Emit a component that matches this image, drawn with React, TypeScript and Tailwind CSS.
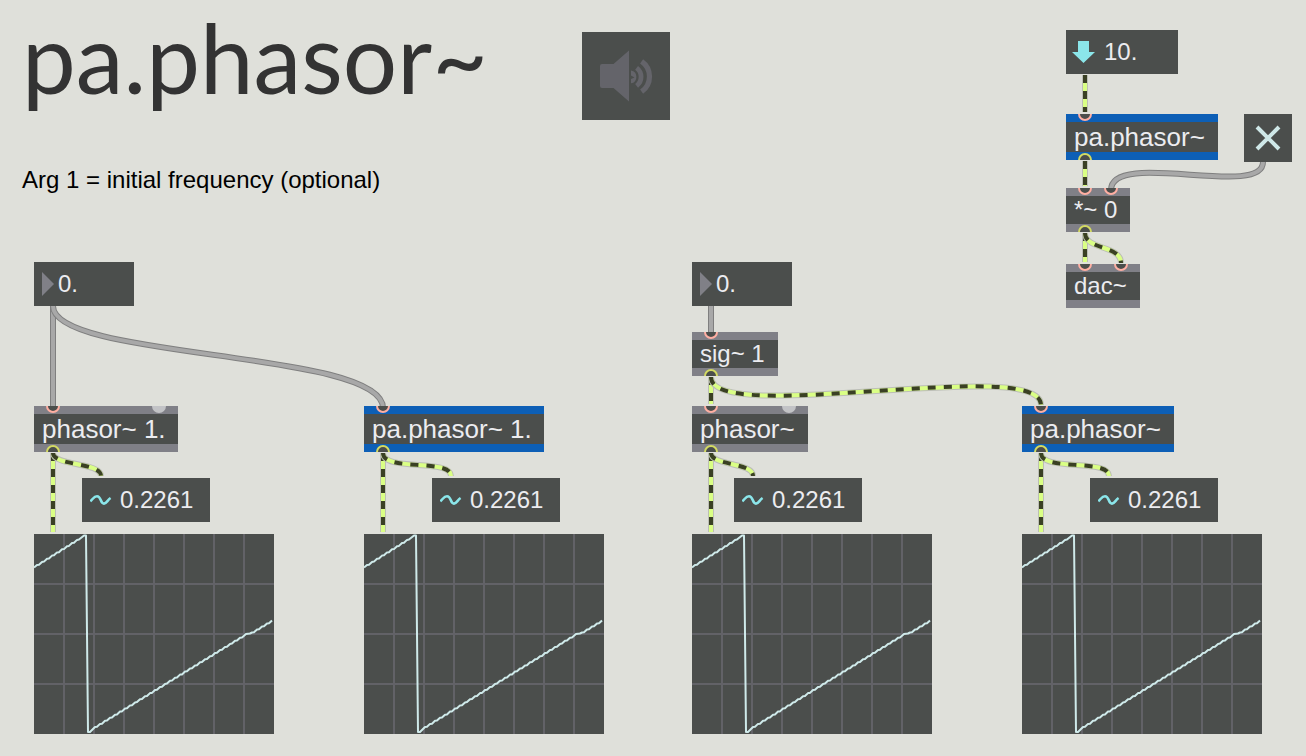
import React, { useState } from "react";

const SANS = "font-['Liberation_Sans',Arial,sans-serif]";

type Point = { x: number; y: number };

type PatchObject = Point & {
  id: string;
  text: string;
  w: number;
  tall: boolean;
  abstraction?: boolean;
  inlets: number[];
  hotless?: number;
  outlet: boolean;
};

const objects: PatchObject[] = [
  { id: "phasor-a", text: "phasor~ 1.", x: 34, y: 406, w: 144, tall: true, inlets: [19], hotless: 125, outlet: true },
  { id: "pa-a", text: "pa.phasor~ 1.", x: 364, y: 406, w: 180, tall: true, abstraction: true, inlets: [19], outlet: true },
  { id: "sig", text: "sig~ 1", x: 692, y: 332, w: 86, tall: false, inlets: [19], outlet: true },
  { id: "phasor-b", text: "phasor~", x: 692, y: 406, w: 116, tall: true, inlets: [19], hotless: 97, outlet: true },
  { id: "pa-b", text: "pa.phasor~", x: 1022, y: 406, w: 152, tall: true, abstraction: true, inlets: [19], outlet: true },
  { id: "pa-c", text: "pa.phasor~", x: 1066, y: 114, w: 152, tall: true, abstraction: true, inlets: [19], outlet: true },
  { id: "mul", text: "*~ 0", x: 1066, y: 188, w: 64, tall: false, inlets: [19, 45], outlet: true },
  { id: "dac", text: "dac~", x: 1066, y: 264, w: 74, tall: false, inlets: [19, 55], outlet: false },
];

const meters: Point[] = [
  { x: 82, y: 478 },
  { x: 432, y: 478 },
  { x: 734, y: 478 },
  { x: 1090, y: 478 },
];

const scopes: Point[] = [
  { x: 34, y: 534 },
  { x: 364, y: 534 },
  { x: 692, y: 534 },
  { x: 1022, y: 534 },
];

const controlCords = [
  "M53 306V408",
  "M53 306C53 360 383 350 383 408",
  "M711 306V334",
  "M1263 162C1263 199 1111 149 1111 190",
];

const signalCords = [
  "M53 453V532",
  "M53 453C53 466 101 462 101 476",
  "M383 453V532",
  "M383 453C383 472 451 458 451 476",
  "M711 377V404",
  "M711 377C711 427 1041 355 1041 405",
  "M711 453V532",
  "M711 453C711 466 753 462 753 476",
  "M1041 453V532",
  "M1041 453C1041 472 1109 458 1109 476",
  "M1085 75V112",
  "M1085 161V186",
  "M1085 233V262",
  "M1085 233C1085 250 1121 245 1121 263",
];

function ramp(from: Point, to: Point, step: number): string {
  const slope = (to.y - from.y) / (to.x - from.x);
  let d = "";
  for (let x = from.x; x + step <= to.x; x += step) {
    const y = from.y + slope * (x - from.x);
    d += `L${x} ${y.toFixed(1)}L${x + 2} ${(y + slope * 0.4).toFixed(1)}`;
  }
  return d + `L${to.x} ${to.y}`;
}

const TRACE =
  "M0 33.5" +
  ramp({ x: 3, y: 31 }, { x: 50, y: 1.5 }, 5) +
  "L52 1.5L54 198L56 198" +
  ramp({ x: 61, y: 193 }, { x: 212, y: 100 }, 5) +
  "L216 99.5" +
  ramp({ x: 218, y: 98.5 }, { x: 238, y: 86.5 }, 5);

function Cords() {
  return (
    <svg className="pointer-events-none absolute left-0 top-0 overflow-visible" width="1306" height="756" fill="none" aria-hidden="true">
      {controlCords.map((d) => (
        <g key={d}>
          <path d={d} stroke="#7f7f7f" strokeWidth="6" />
          <path d={d} stroke="#a8a8a8" strokeWidth="4" />
        </g>
      ))}
      {signalCords.map((d) => (
        <g key={d}>
          <path d={d} stroke="#bcbeb6" strokeWidth="6" />
          <path d={d} stroke="#daff85" strokeWidth="4" />
          <path d={d} stroke="#3a4024" strokeWidth="4" strokeDasharray="8 8" />
        </g>
      ))}
    </svg>
  );
}

function Box({ o }: { o: PatchObject }) {
  const h = o.tall ? 46 : 44;
  const bar = o.abstraction ? "border-[#0d5fb6]" : "border-[#808087]";
  const size = o.tall ? "text-[26px]" : "text-2xl";
  return (
    <div
      className={`absolute flex items-center border-y-8 bg-[#4b4e4c] pl-2 whitespace-pre text-[#ececf0] ${bar}`}
      style={{ left: o.x, top: o.y, width: o.w, height: h }}
    >
      <span className={`${size} leading-7`}>{o.text}</span>
      <svg className="absolute -top-2 left-0" width={o.w} height={h} aria-hidden="true">
        {o.inlets.map((cx) => (
          <circle key={cx} cx={cx} cy="0" r="6" fill="#4b4e4c" stroke="#ffafa3" strokeWidth="2" />
        ))}
        {o.hotless && <circle cx={o.hotless} cy="0" r="7" fill="#c2c3c6" />}
        {o.outlet && <circle cx="19" cy={h} r="6" fill="#4b4e4c" stroke="#d3da62" strokeWidth="2" />}
      </svg>
    </div>
  );
}

function NumberBox({ x, y, label, initial }: Point & { label: string; initial: string }) {
  const [value, setValue] = useState(initial);
  return (
    <label className="absolute flex h-11 w-[100px] items-center bg-[#4b4e4c] pl-2" style={{ left: x, top: y }}>
      <svg width="12" height="24" className="shrink-0" aria-hidden="true">
        <path d="M0 0L12 12L0 24Z" fill="#808087" />
      </svg>
      <input
        aria-label={label}
        value={value}
        onChange={(e) => setValue(e.target.value)}
        className="ml-1 w-full min-w-0 bg-transparent text-2xl leading-none text-[#ececf0] outline-none"
      />
    </label>
  );
}

function FrequencyBox() {
  const [value, setValue] = useState("10.");
  return (
    <label className="absolute left-[1066px] top-[30px] flex h-11 w-28 items-center bg-[#4b4e4c] pl-1.5">
      <svg width="24" height="22" className="shrink-0" aria-hidden="true">
        <path d="M6 0H17V11H23L11.5 22L0 11H6Z" fill="#8be6ea" />
      </svg>
      <input
        aria-label="Frequency"
        value={value}
        onChange={(e) => setValue(e.target.value)}
        className="ml-2 w-full min-w-0 bg-transparent text-2xl leading-none text-[#ececf0] outline-none"
      />
    </label>
  );
}

function Meter({ x, y }: Point) {
  return (
    <div className="absolute flex h-11 w-32 items-center gap-2 bg-[#4b4e4c] pl-2 text-2xl leading-none text-[#ececf0]" style={{ left: x, top: y }}>
      <svg width="22" height="12" fill="none" aria-hidden="true">
        <path d="M0.300 7.300C3 5 4 2.200 7 2.200C11.500 2.200 10 9.600 14 9.600C16.500 9.600 17.500 6 20.600 4" stroke="#8be6ea" strokeWidth="2.600" />
      </svg>
      <output>0.2261</output>
    </div>
  );
}

function Scope({ x, y }: Point) {
  return (
    <svg className="absolute bg-[#4b4e4c]" style={{ left: x, top: y }} width="240" height="200" fill="none" role="img" aria-label="Oscilloscope">
      <path
        d="M30 0V200M60 0V200M90 0V200M120 0V200M150 0V200M180 0V200M210 0V200M0 50H240M0 100H240M0 150H240"
        stroke="#626267"
        strokeWidth="2"
      />
      <path d={TRACE} stroke="#cfeaea" strokeWidth="2" strokeLinejoin="round" />
    </svg>
  );
}

function Speaker() {
  const [on, setOn] = useState(false);
  return (
    <button
      type="button"
      aria-label="Audio on/off"
      aria-pressed={on}
      onClick={() => setOn(!on)}
      className="absolute left-[582px] top-8 size-[88px] bg-[#4b4e4c]"
    >
      <svg width="88" height="88" fill="none" aria-hidden="true">
        <path d="M20 32H31.500L47 18.500V69.500L31.500 56H20Q18 56 18 54V34Q18 32 20 32Z" fill="#64646a" />
        <path d="M49 38.500A6.500 6.500 0 0 1 49 51.300V47L52.500 45.500L49 43.500Z" fill="#64646a" />
        <path d="M54.600 35.800A11.300 11.300 0 0 1 54.600 53.800" stroke="#64646a" strokeWidth="4.800" />
        <path d="M59.600 29.300A18.600 18.600 0 0 1 59.600 59.700" stroke="#64646a" strokeWidth="5.200" />
      </svg>
    </button>
  );
}

function Toggle() {
  const [on, setOn] = useState(true);
  return (
    <label className="absolute left-[1244px] top-[114px] grid size-12 place-items-center bg-[#4b4e4c]">
      <input
        type="checkbox"
        aria-label="Output gate"
        checked={on}
        onChange={(e) => setOn(e.target.checked)}
        className="col-start-1 row-start-1 size-full appearance-none"
      />
      <svg width="26" height="26" className="pointer-events-none col-start-1 row-start-1" aria-hidden="true">
        <path d="M2 2L24 24M24 2L2 24" stroke={on ? "#cfe8e8" : "#64646a"} strokeWidth="4" />
      </svg>
    </label>
  );
}

export default function App() {
  return (
    <main className={`relative min-h-screen bg-[#dfe0da] ${SANS}`}>
      <Cords />
      <header className="px-[22px]">
        <h1 className="font-['Lato',sans-serif] text-8xl leading-[114px] text-[#333333]">pa.phasor~</h1>
        <p className="mt-[50px] text-2xl text-black">Arg 1 = initial frequency (optional)</p>
      </header>
      <Speaker />
      <FrequencyBox />
      <Toggle />
      <NumberBox x={34} y={262} label="Control frequency" initial="0." />
      <NumberBox x={692} y={262} label="Signal frequency" initial="0." />
      {objects.map((o) => (
        <Box key={o.id} o={o} />
      ))}
      {meters.map((m) => (
        <Meter key={m.x} {...m} />
      ))}
      {scopes.map((s) => (
        <Scope key={s.x} {...s} />
      ))}
    </main>
  );
}
